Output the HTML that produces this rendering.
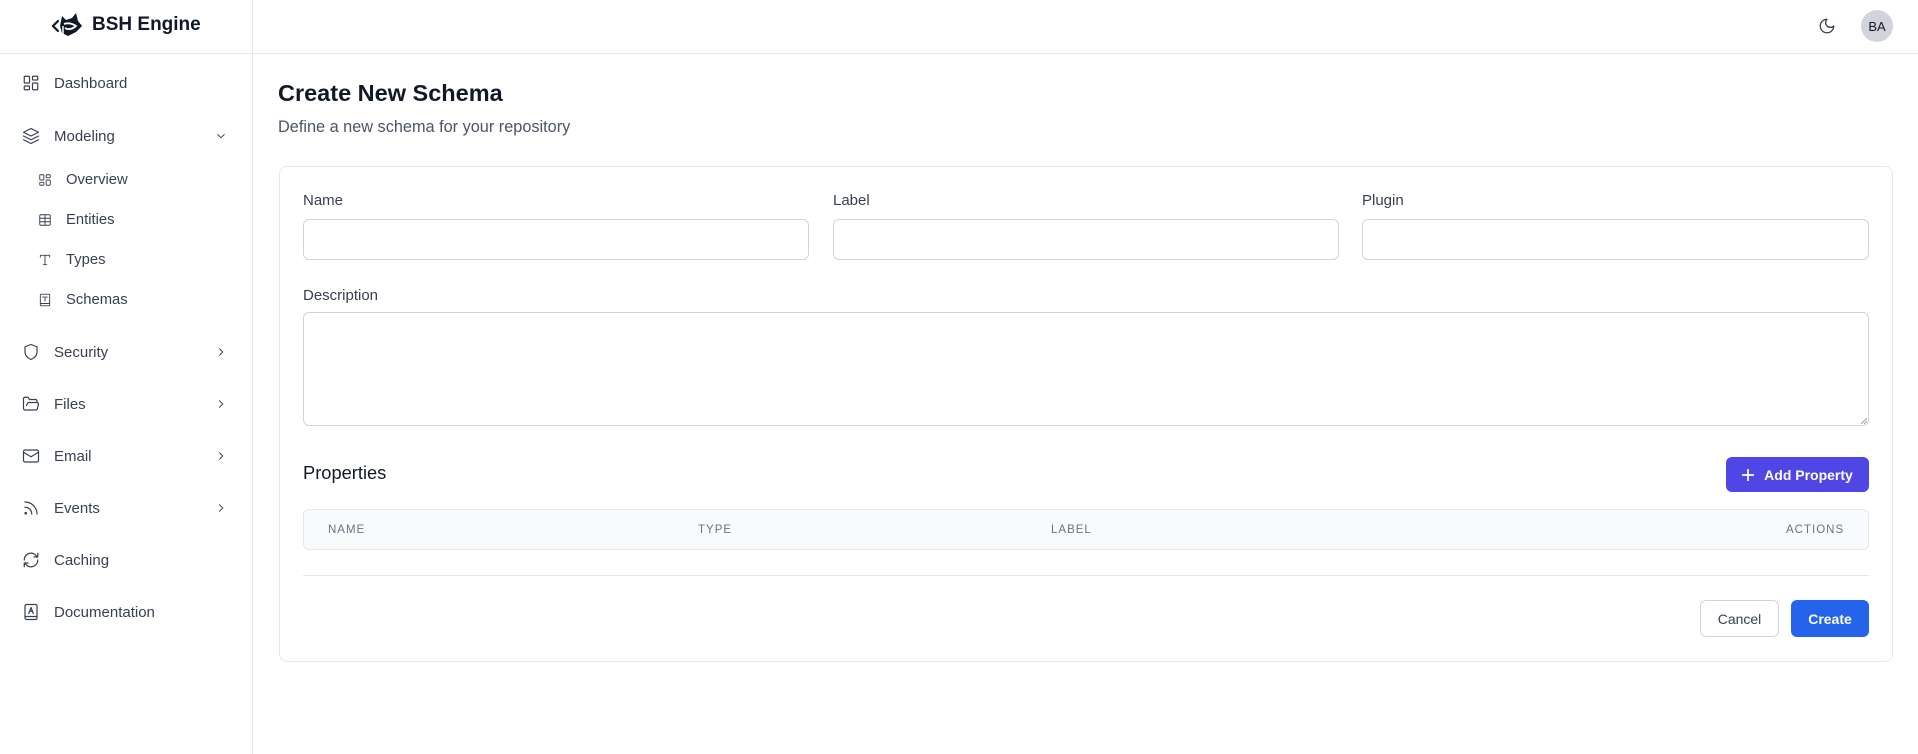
<!DOCTYPE html>
<html><head><meta charset="utf-8"><style>
*{box-sizing:border-box;margin:0;padding:0}
body{width:1918px;height:754px;background:#fff;font-family:"Liberation Sans",sans-serif;color:#111827;position:relative;overflow:hidden}
.a{position:absolute}
.side{left:0;top:0;width:253px;height:754px;border-right:1px solid #e5e7eb}
.hdr{left:253px;top:0;width:1665px;height:54px;border-bottom:1px solid #e5e7eb}
.sideh{left:0;top:53px;width:253px;height:1px;background:#e5e7eb}
.nav{left:22px;font-size:15px;color:#374151;display:flex;align-items:center;height:20px;transform:translateY(-10px)}
.nav svg{width:18px;height:18px;margin-right:14px;fill:none;stroke:#374151;stroke-width:1.6;stroke-linecap:round;stroke-linejoin:round}
.sub{left:38px;font-size:14.8px}
.sub svg{width:14px;height:14px;margin-right:14px}
.chev{left:214px;width:14px;height:14px;fill:none;stroke:#374151;stroke-width:1.6;transform:translateY(-7px)}
.lbl{font-size:15px;color:#374151}
.inp{border:1px solid #d1d5db;border-radius:6px;background:#fff}
.th{font-size:11.5px;color:#6b7280;letter-spacing:1px;top:524px}
</style></head><body>
<div class="a side"></div>
<div class="a hdr"></div>
<div class="a sideh"></div>

<svg class="a" style="left:50px;top:12px" width="34" height="28" viewBox="0 0 34 28">
<path d="M8 9 L3 14 L8 19" fill="none" stroke="#111827" stroke-width="2.2" stroke-linecap="round"/>
<path d="M12 4 L16 8 L22 6 L26 1 L28 9 L32 14 L26 20 L18 24 L12 21 L10 14 Z" fill="#111827"/>
<path d="M14 12 Q20 10 26 14 Q20 19 15 16" fill="none" stroke="#fff" stroke-width="1.8"/>
<path d="M13 14 L13 22" stroke="#fff" stroke-width="1.5"/>
</svg>
<div class="a" style="left:92px;top:14px;font-size:19px;font-weight:bold;color:#111827">BSH Engine</div>

<div class="a nav" style="top:83px"><svg viewBox="0 0 24 24"><rect x="3" y="3" width="7" height="9" rx="1"/><rect x="14" y="3" width="7" height="5" rx="1"/><rect x="14" y="12" width="7" height="9" rx="1"/><rect x="3" y="16" width="7" height="5" rx="1"/></svg>Dashboard</div>
<div class="a nav" style="top:136px"><svg viewBox="0 0 24 24"><path d="M12 2 2 7l10 5 10-5-10-5z"/><path d="m2 12 10 5 10-5"/><path d="m2 17 10 5 10-5"/></svg>Modeling</div>
<svg class="a chev" style="top:136px" viewBox="0 0 24 24"><path d="m6 9 6 6 6-6"/></svg>
<div class="a nav sub" style="top:180px"><svg viewBox="0 0 24 24"><rect x="3" y="3" width="7" height="9" rx="1"/><rect x="14" y="3" width="7" height="5" rx="1"/><rect x="14" y="12" width="7" height="9" rx="1"/><rect x="3" y="16" width="7" height="5" rx="1"/></svg>Overview</div>
<div class="a nav sub" style="top:220px"><svg viewBox="0 0 24 24"><rect x="3" y="3" width="18" height="18" rx="2"/><path d="M3 9h18M3 15h18M12 3v18"/></svg>Entities</div>
<div class="a nav sub" style="top:260px"><svg viewBox="0 0 24 24"><path d="M4 7V4h16v3M9 20h6M12 4v16"/></svg>Types</div>
<div class="a nav sub" style="top:300px"><svg viewBox="0 0 24 24"><rect x="4" y="2" width="16" height="20" rx="2"/><path d="M8 7h8M12 7v7M4 18h16"/></svg>Schemas</div>
<div class="a nav" style="top:352px"><svg viewBox="0 0 24 24"><path d="M12 22s8-3 8-10V5l-8-3-8 3v7c0 7 8 10 8 10z"/></svg>Security</div>
<svg class="a chev" style="top:352px" viewBox="0 0 24 24"><path d="m9 6 6 6-6 6"/></svg>
<div class="a nav" style="top:404px"><svg viewBox="0 0 24 24"><path d="m6 14 1.5-3a2 2 0 0 1 1.8-1H20a2 2 0 0 1 1.9 2.5l-1.5 6a2 2 0 0 1-2 1.5H4a2 2 0 0 1-2-2V5a2 2 0 0 1 2-2h4l2 3h8a2 2 0 0 1 2 2v2"/></svg>Files</div>
<svg class="a chev" style="top:404px" viewBox="0 0 24 24"><path d="m9 6 6 6-6 6"/></svg>
<div class="a nav" style="top:456px"><svg viewBox="0 0 24 24"><rect x="2" y="4" width="20" height="16" rx="2"/><path d="m22 7-10 6L2 7"/></svg>Email</div>
<svg class="a chev" style="top:456px" viewBox="0 0 24 24"><path d="m9 6 6 6-6 6"/></svg>
<div class="a nav" style="top:508px"><svg viewBox="0 0 24 24"><path d="M4 11a9 9 0 0 1 9 9M4 4a16 16 0 0 1 16 16"/><circle cx="5" cy="19" r="1"/></svg>Events</div>
<svg class="a chev" style="top:508px" viewBox="0 0 24 24"><path d="m9 6 6 6-6 6"/></svg>
<div class="a nav" style="top:560px"><svg viewBox="0 0 24 24"><path d="M3 12a9 9 0 0 1 15-6.7L21 8M21 3v5h-5M21 12a9 9 0 0 1-15 6.7L3 16M8 16H3v5"/></svg>Caching</div>
<div class="a nav" style="top:612px"><svg viewBox="0 0 24 24"><rect x="4" y="2" width="16" height="20" rx="2"/><path d="M4 18h16M9 14l3-8 3 8M10 11h4"/></svg>Documentation</div>

<svg class="a" style="left:1818px;top:17px" width="18" height="18" viewBox="0 0 24 24" fill="none" stroke="#374151" stroke-width="1.7" stroke-linecap="round" stroke-linejoin="round"><path d="M12 3a6 6 0 0 0 9 9 9 9 0 1 1-9-9z"/></svg>
<div class="a" style="left:1861px;top:10px;width:32px;height:32px;border-radius:50%;background:#d1d5db;font-size:13px;color:#111827;display:flex;align-items:center;justify-content:center">BA</div>

<div class="a" style="left:278px;top:80px;font-size:23.5px;font-weight:bold;color:#111827">Create New Schema</div>
<div class="a" style="left:278px;top:118px;font-size:16.3px;color:#4b5563">Define a new schema for your repository</div>

<div class="a" style="left:279px;top:166px;width:1614px;height:496px;border:1px solid #e5e7eb;border-radius:8px"></div>
<div class="a lbl" style="left:303px;top:192px">Name</div>
<div class="a lbl" style="left:833px;top:192px">Label</div>
<div class="a lbl" style="left:1362px;top:192px">Plugin</div>
<div class="a inp" style="left:303px;top:219px;width:506px;height:41px"></div>
<div class="a inp" style="left:833px;top:219px;width:506px;height:41px"></div>
<div class="a inp" style="left:1362px;top:219px;width:507px;height:41px"></div>
<div class="a lbl" style="left:303px;top:287px">Description</div>
<div class="a inp" style="left:303px;top:312px;width:1566px;height:114px"></div>
<svg class="a" style="left:1860px;top:417px" width="7" height="7"><path d="M7 1 1 7M7 4 4 7" stroke="#9ca3af" stroke-width="1"/></svg>

<div class="a" style="left:303px;top:462px;font-size:18.3px;color:#111827">Properties</div>
<div class="a" style="left:1726px;top:457px;width:143px;height:35px;border-radius:6px;background:#4f46e5;color:#fff;font-size:14px;font-weight:bold;display:flex;align-items:center;justify-content:center"><svg width="12" height="12" viewBox="0 0 12 12" style="margin-right:10px"><path d="M6 0v12M0 6h12" stroke="#fff" stroke-width="1.7"/></svg>Add Property</div>

<div class="a" style="left:303px;top:509px;width:1566px;height:41px;border:1px solid #e5e7eb;border-radius:6px;background:#f9fafb"></div>
<div class="a th" style="left:328px">NAME</div>
<div class="a th" style="left:698px">TYPE</div>
<div class="a th" style="left:1051px">LABEL</div>
<div class="a th" style="left:1786px">ACTIONS</div>
<div class="a" style="left:303px;top:575px;width:1566px;height:1px;background:#e5e7eb"></div>

<div class="a" style="left:1700px;top:600px;width:79px;height:37px;border:1px solid #d1d5db;border-radius:6px;font-size:14px;color:#374151;display:flex;align-items:center;justify-content:center">Cancel</div>
<div class="a" style="left:1791px;top:600px;width:78px;height:37px;border-radius:6px;background:#2563eb;font-size:14px;font-weight:bold;color:#fff;display:flex;align-items:center;justify-content:center">Create</div>
</body></html>
